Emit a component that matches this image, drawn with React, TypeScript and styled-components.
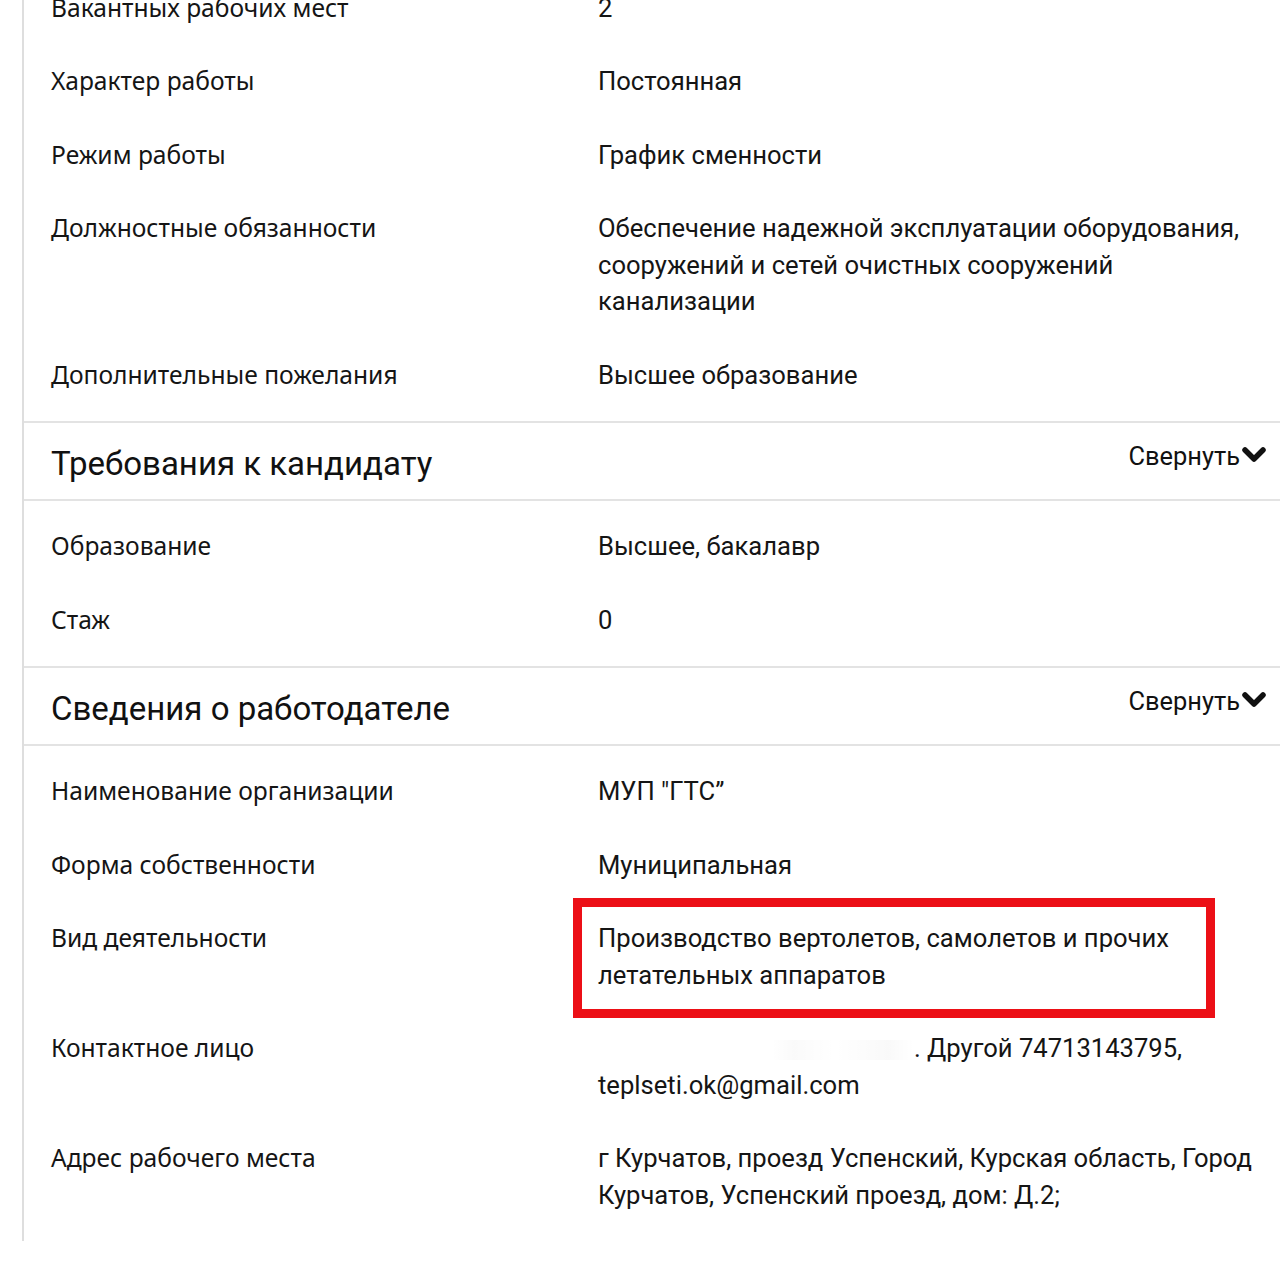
import React from "react";
import styled, { createGlobalStyle } from "styled-components";

const Global = createGlobalStyle`
  html, body { margin: 0; padding: 0; background: #fff; }
  body { overflow: hidden; color: #141414; }
`;

const Page = styled.div`
  width: 1280px;
  height: 1280px;
  overflow: hidden;
  background: #fff;
`;

const Panel = styled.div`
  margin-top: -38px;
  margin-left: 22px;
  border-left: 2px solid #dedede;
  display: flex;
  flex-direction: column;
`;

const Section = styled.section`
  padding: 9px 0 9px;
  display: flex;
  flex-direction: column;
`;

const Header = styled.div`
  box-sizing: border-box;
  height: 80px;
  border-top: 2px solid #e3e3e3;
  border-bottom: 2px solid #e3e3e3;
  display: flex;
  justify-content: space-between;
  align-items: center;
  padding: 0 14px 0 27px;
`;

const Title = styled.h2`
  margin: 6px 0 0;
  font-family: Roboto, "Noto Sans", sans-serif;
  font-weight: 400;
  font-size: 33px;
  color: #111;
`;

const Toggle = styled.button`
  align-self: flex-start;
  margin-top: 18px;
  border: 0;
  background: none;
  padding: 0;
  display: flex;
  align-items: center;
  gap: 2px;
  font-family: Roboto, "Noto Sans", sans-serif;
  font-size: 25.4px;
  color: #111;
  cursor: pointer;
`;

const Chevron = styled.svg`
  width: 24px;
  height: 18px;
  margin-top: -2px;
`;

const Row = styled.div`
  display: grid;
  grid-template-columns: 547px 1fr;
  padding: 18.5px 20px 18.5px 27px;
  line-height: 36.5px;
`;

const Label = styled.div`
  font-family: "Noto Sans", "Open Sans", sans-serif;
  font-size: 24.6px;
  color: #151515;
`;

const Value = styled.div<{ $marked?: boolean }>`
  position: relative;
  font-family: Roboto, "Noto Sans", sans-serif;
  font-size: 25.6px;
  color: #151515;
  ${(p) =>
    p.$marked &&
    `
    &::after {
      content: "";
      position: absolute;
      left: -25px;
      top: -22px;
      width: 624px;
      height: 102px;
      border: 9px solid #ec0f16;
    }
  `}
`;

const Hidden = styled.span`
  display: inline-block;
  width: 316px;
  height: 20px;
  vertical-align: middle;
  background: linear-gradient(90deg, transparent 0 55%, rgba(0,0,0,0.02) 62%, transparent 75%, rgba(0,0,0,0.025) 92%, transparent 100%);
`;

type Item = { label: string; value: React.ReactNode; marked?: boolean };

const first: Item[] = [
  { label: "Вакантных рабочих мест", value: "2" },
  { label: "Характер работы", value: "Постоянная" },
  { label: "Режим работы", value: "График сменности" },
  {
    label: "Должностные обязанности",
    value: "Обеспечение надежной эксплуатации оборудования, сооружений и сетей очистных сооружений канализации",
  },
  { label: "Дополнительные пожелания", value: "Высшее образование" },
];

const req: Item[] = [
  { label: "Образование", value: "Высшее, бакалавр" },
  { label: "Стаж", value: "0" },
];

const emp: Item[] = [
  { label: "Наименование организации", value: "МУП \"ГТС”" },
  { label: "Форма собственности", value: "Муниципальная" },
  {
    label: "Вид деятельности",
    value: "Производство вертолетов, самолетов и прочих летательных аппаратов",
    marked: true,
  },
  {
    label: "Контактное лицо",
    value: (
      <>
        <Hidden />. Другой 74713143795, teplseti.ok@gmail.com
      </>
    ),
  },
  {
    label: "Адрес рабочего места",
    value: "г Курчатов, проезд Успенский, Курская область, Город Курчатов, Успенский проезд, дом: Д.2;",
  },
];

const Rows = ({ items }: { items: Item[] }) => (
  <Section>
    {items.map((it) => (
      <Row key={it.label}>
        <Label>{it.label}</Label>
        <Value $marked={it.marked}>{it.value}</Value>
      </Row>
    ))}
  </Section>
);

const SectionHeader = ({ title }: { title: string }) => (
  <Header>
    <Title>{title}</Title>
    <Toggle>
      Свернуть
      <Chevron viewBox="0 0 24 18">
        <polyline points="3,4 12,13 21,4" fill="none" stroke="#111" strokeWidth="5.5" strokeLinecap="round" strokeLinejoin="round" />
      </Chevron>
    </Toggle>
  </Header>
);

export default function App() {
  return (
    <Page>
      <Global />
      <Panel>
        <Rows items={first} />
        <SectionHeader title="Требования к кандидату" />
        <Rows items={req} />
        <SectionHeader title="Сведения о работодателе" />
        <Rows items={emp} />
      </Panel>
    </Page>
  );
}
